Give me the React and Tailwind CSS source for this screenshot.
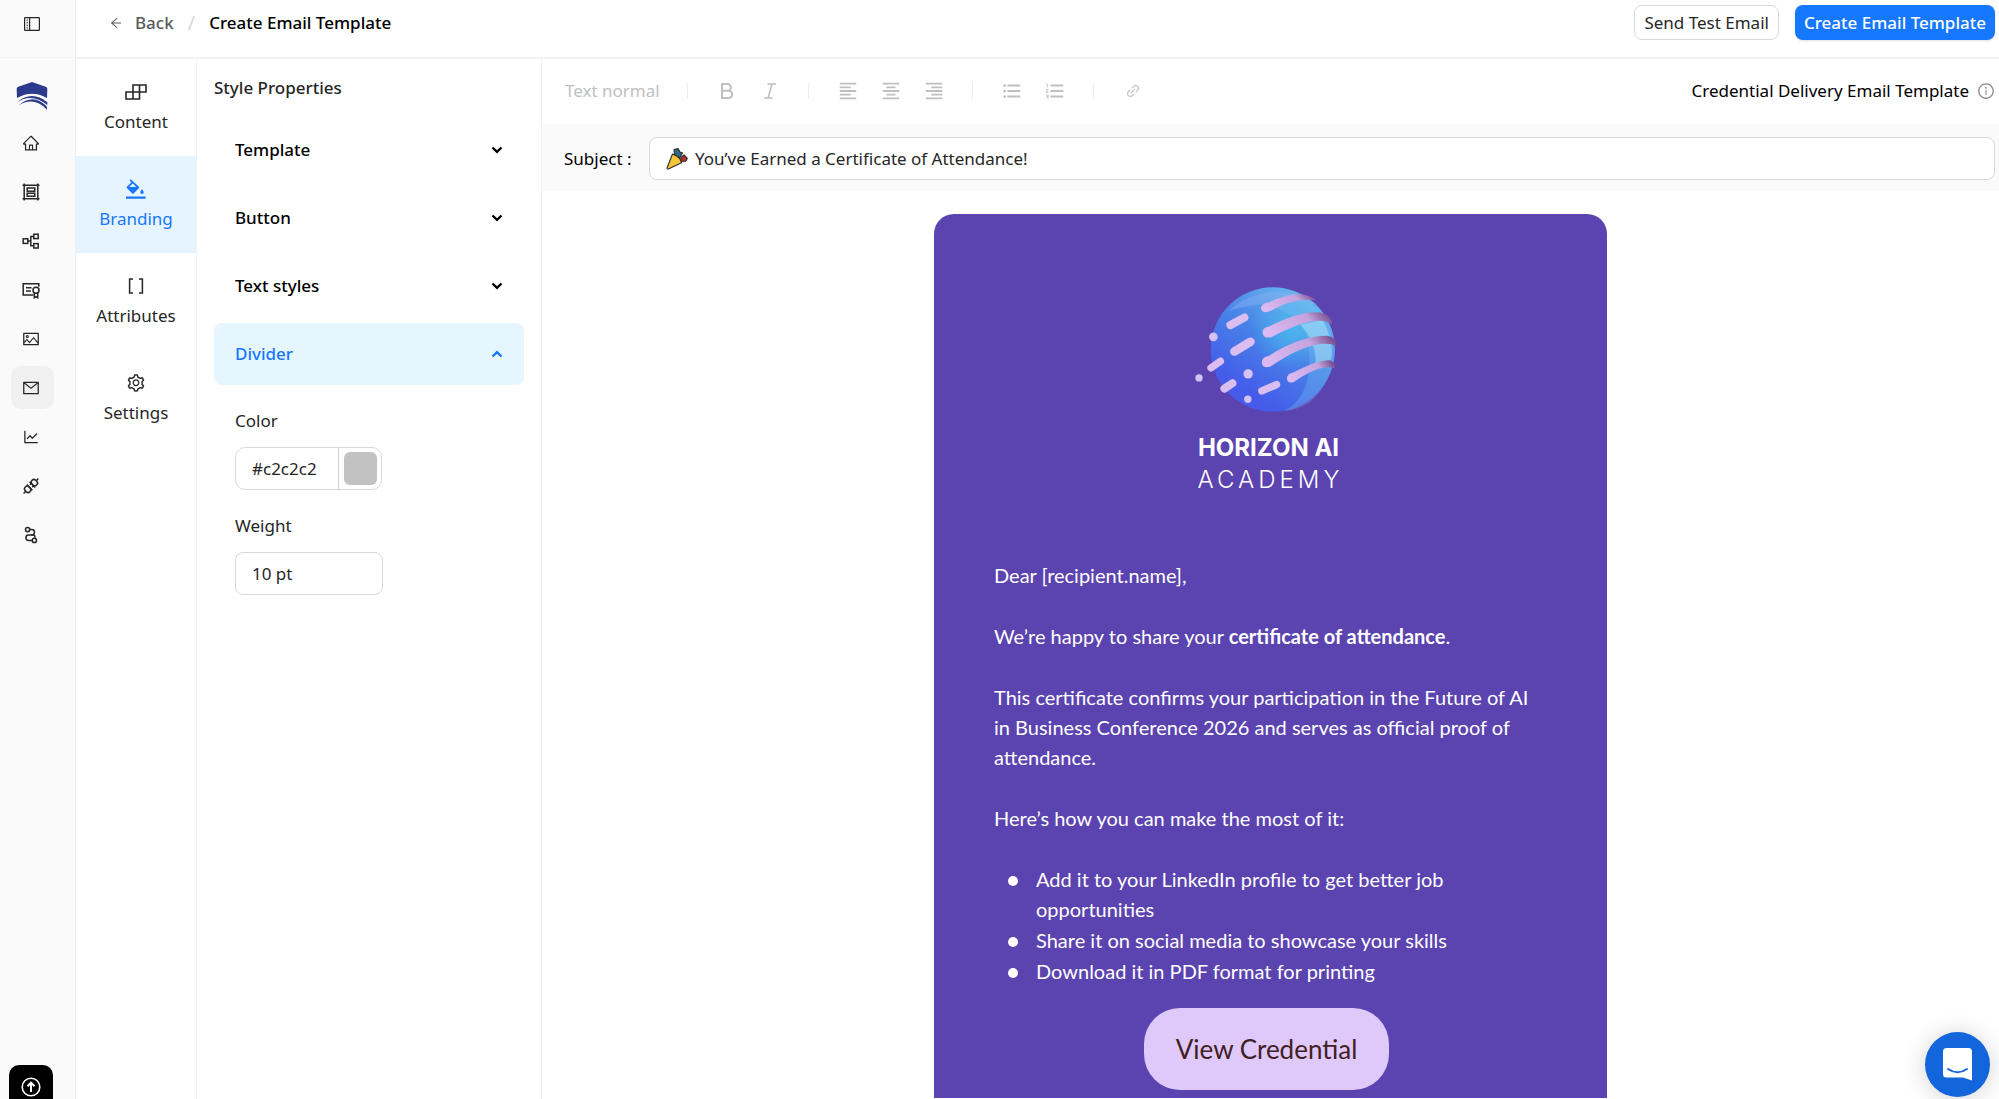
import {
  AiOutlineArrowLeft,
  AiOutlineHome,
  AiOutlineInfoCircle,
  AiOutlineLineChart,
  AiOutlineLink,
  AiOutlineMail,
  AiOutlinePicture,
  AiOutlineSetting,
} from 'react-icons/ai';
import {
  MdFormatAlignCenter,
  MdFormatAlignLeft,
  MdFormatAlignRight,
  MdFormatListBulleted,
  MdFormatListNumbered,
} from 'react-icons/md';
import clsx from 'clsx';

const line = { fill: 'none', stroke: 'currentColor', strokeWidth: 1.5 };

function ToggleIcon() {
  return (
    <svg viewBox="0 0 16 14" className="w-4 h-3.5" {...line} strokeWidth="1.2">
      <rect x="0.6" y="0.6" width="14.8" height="12.8" rx="0.6" />
      <path d="M5.6 0.6v12.8" />
      <path d="M3.2 2.5v9" strokeDasharray="1.2 1.4" />
    </svg>
  );
}

function FrameIcon() {
  return (
    <svg viewBox="0 0 18 18" className="size-[18px]" {...line}>
      <path d="M2.2 0.5v17M15.8 0.5v17M0.5 2.2h17M0.5 15.8h17" />
      <rect x="5.2" y="5" width="7.6" height="3.2" />
      <rect x="5.2" y="10.2" width="7.6" height="3" />
    </svg>
  );
}

function BranchIcon() {
  return (
    <svg viewBox="0 0 18 18" className="size-[18px]" {...line}>
      <rect x="1.2" y="6.8" width="4.6" height="4.6" />
      <rect x="11.8" y="2.2" width="4.4" height="4.4" />
      <rect x="11.8" y="11.6" width="4.4" height="4.4" />
      <path d="M5.8 9.1h3M11.8 4.4H8.8v9.4h3" />
    </svg>
  );
}

function CertificateIcon() {
  return (
    <svg viewBox="0 0 18 18" className="size-[18px]" {...line}>
      <path d="M11.5 14H1.2V2.8h15.6v3" />
      <path d="M4 6.8h5.5M4 10h4.8" />
      <circle cx="14" cy="9.2" r="3" />
      <path d="M12.3 11.8v5l1.7-1.2 1.7 1.2v-5" />
    </svg>
  );
}

function PlugIcon() {
  return (
    <svg viewBox="0 0 18 18" className="size-[18px]" {...line}>
      <g transform="rotate(45 9 9)">
        <path d="M9-1.5V1.6M9 16.4v3.1" />
        <rect x="5.7" y="1.6" width="6.6" height="5.4" rx="2.6" />
        <rect x="5.7" y="11" width="6.6" height="5.4" rx="2.6" />
        <path d="M5 7h8M5 11h8M7.3 7v2M10.7 7v2" />
      </g>
    </svg>
  );
}

function PathIcon() {
  return (
    <svg viewBox="0 0 18 18" className="size-[18px]" {...line}>
      <circle cx="5.6" cy="3.6" r="2.1" />
      <circle cx="12.4" cy="14.4" r="2.1" />
      <path d="M7.7 3.6h2.1a2.7 2.7 0 0 1 0 5.4H6.6a2.7 2.7 0 0 0 0 5.4h3.7" />
      <path d="M9.2 9h2.4c1.2 0 1.6 1.4 1.2 3" />
    </svg>
  );
}

function BlocksIcon() {
  return (
    <svg viewBox="0 0 22 16" className="w-[22px] h-4" {...line} strokeWidth="1.6">
      <path d="M8 1h13v7H8zM14.5 1v14H1V8h7v7M8 8v7M14.5 8H8" />
    </svg>
  );
}

function FillIcon() {
  return (
    <svg viewBox="0 0 20 20" className="size-5" fill="currentColor">
      <path d="M4.6 0.3 3.5 1.4l1.9 1.9L0.9 7.8a0.9 0.9 0 0 0 0 1.3l5.4 5.3a0.9 0.9 0 0 0 1.3 0L13 9.1a0.9 0.9 0 0 0 0-1.3zM3.1 7.9l3.6-3.4 3.7 3.4z" />
      <path d="M16 10.2s-1.7 1.9-1.7 3.1a1.7 1.7 0 0 0 3.4 0c0-1.2-1.7-3.1-1.7-3.1zM0 17.6h19.6v2.2H0z" />
    </svg>
  );
}

function BracketsIcon() {
  return (
    <svg viewBox="0 0 16 16" className="size-4" {...line}>
      <path d="M5 1H1.6v14H5M11 1h3.4v14H11" />
    </svg>
  );
}

function BoldIcon() {
  return (
    <svg viewBox="0 0 14 16" className="w-3.5 h-4" {...line} strokeWidth="2">
      <path d="M2 1h5.5a3.4 3.4 0 0 1 0 6.8H2zM2 7.8h6.6a3.6 3.6 0 0 1 0 7.2H2z" />
    </svg>
  );
}

function ItalicIcon() {
  return (
    <svg viewBox="0 0 14 16" className="w-3.5 h-4" {...line}>
      <path d="M4.5 1H13M1 15h8.5M9 1 5 15" />
    </svg>
  );
}

function Chevron({ open }) {
  return (
    <svg viewBox="0 0 12 8" className={clsx('w-3 h-2', open && 'rotate-180')} {...line} strokeWidth="2.4">
      <path d="m1.5 1.5 4.5 4.3 4.5-4.3" />
    </svg>
  );
}

function BrandMark() {
  return (
    <svg viewBox="20 27 94 84" className="w-8 h-7" fill="#2b3a8c">
      <path d="M67 27 108 41Q113 43 113 47L112 75Q67 49 22 75L21 47Q21 43 26 41z" />
      <path d="M22 88Q66 50 113 88V96Q66 58 22 88z" />
      <path d="M26 98Q72 58 112 102V110Q72 68 26 98z" />
    </svg>
  );
}

function PopperIcon() {
  return (
    <svg viewBox="0 0 22 22" className="w-[22px] h-[22px]" stroke="#2b2b2b" strokeWidth="1.1" strokeLinejoin="round">
      <path d="M8 1.500 12 0.600l2 3.400 2.500 1-3 5-5-3.500z" fill="#2c6a86" />
      <path d="m15 9.500 3-2.500 3.300 3.500-1.600 2.700-5.200.3z" fill="#b3322e" />
      <path d="M6.500 6 1 20q0 1.200 1.400 1L15.500 14.800q-.5-5.300-9-8.800z" fill="#f4c534" />
    </svg>
  );
}

// [x1, y1, x2, y2, width]
const dashes = [
  [210, 196, 252, 173, 24],
  [222, 275, 270, 246, 26],
  [152, 324, 180, 304, 22],
  [192, 386, 216, 370, 24],
  [304, 393, 348, 374, 22],
];

const dots = [
  [159, 231, 13],
  [116, 354, 11],
  [263, 342, 14],
  [262, 418, 11],
];

function Globe() {
  return (
    <svg viewBox="104 82 428 374" className="mr-2 w-[143px] h-[125px]" fill="none">
      <defs>
        <linearGradient id="sea" x1="0.8" y1="0.1" x2="0.3" y2="0.85">
          <stop offset="0" stopColor="#69b4f0" />
          <stop offset="0.5" stopColor="#4782e8" />
          <stop offset="1" stopColor="#455bea" />
        </linearGradient>
        <radialGradient id="glow" cx="0.64" cy="0.34" r="0.32">
          <stop offset="0" stopColor="#48bdee" stopOpacity="0.8" />
          <stop offset="1" stopColor="#48bdee" stopOpacity="0" />
        </radialGradient>
        <linearGradient id="band" x1="0" y1="0.6" x2="1" y2="0.3">
          <stop offset="0" stopColor="#dcb9f2" />
          <stop offset="0.7" stopColor="#c3a4de" />
          <stop offset="1" stopColor="#7a5292" />
        </linearGradient>
      </defs>
      <circle cx="337" cy="269" r="186" fill="url(#sea)" />
      <path d="M205 152Q300 70 430 108L470 134Q320 120 205 152z" fill="#8fb2f6" opacity="0.4" />
      <circle cx="337" cy="269" r="186" fill="url(#glow)" />
      <path d="M330 140Q410 160 440 235Q470 400 370 454Q480 444 518 310Q530 170 400 94z" fill="#7cc4f3" opacity="0.3" />
      <path d="M420 195l66-15q40 80 22 130l-44 8q6-70-44-123z" fill="#b9ecf7" opacity="0.45" />
      <path d="M301 145Q305 128 325 128Q420 82 468 122Q400 112 330 154Q304 164 301 145z" fill="url(#band)" />
      <path d="M306 216Q308 202 326 200Q420 152 480 158Q512 165 515 194Q470 160 332 232Q306 238 306 216z" fill="url(#band)" />
      <path d="M304 308Q304 292 325 288Q420 228 500 228Q528 232 528 258Q460 232 330 320Q306 328 304 308z" fill="url(#band)" />
      <path d="M379 355Q380 342 398 338Q470 300 508 301Q526 306 522 325Q480 310 400 366Q380 372 379 355z" fill="url(#band)" />
      <g stroke="#dabdf1" strokeLinecap="round">
        {dashes.map(([x1, y1, x2, y2, width]) => (
          <path key={x1} d={`M${x1} ${y1}L${x2} ${y2}`} strokeWidth={width} />
        ))}
      </g>
      {dots.map(([cx, cy, r]) => (
        <circle key={cx} cx={cx} cy={cy} r={r} fill="#d5c2f4" />
      ))}
    </svg>
  );
}

const railItems = [
  { label: 'Home', icon: <AiOutlineHome size={18} /> },
  { label: 'Designs', icon: <FrameIcon /> },
  { label: 'Workflows', icon: <BranchIcon /> },
  { label: 'Credentials', icon: <CertificateIcon /> },
  { label: 'Images', icon: <AiOutlinePicture size={18} /> },
  { label: 'Emails', icon: <AiOutlineMail size={18} />, active: true },
  { label: 'Analytics', icon: <AiOutlineLineChart size={18} /> },
  { label: 'Integrations', icon: <PlugIcon /> },
  { label: 'Pathways', icon: <PathIcon /> },
];

function Rail() {
  return (
    <aside className="w-[76px] shrink-0 flex flex-col bg-[#fafafa] border-r border-[#efefef]">
      <div className="h-[58px] pl-6 pb-2.5 flex items-center border-b border-[#f3f3f3]">
        <button aria-label="Toggle sidebar">
          <ToggleIcon />
        </button>
      </div>
      <a href="#" aria-label="Dashboard" className="mt-6 ml-4 w-8">
        <BrandMark />
      </a>
      <nav className="mt-[11px] ml-[11px] flex flex-col gap-1.5">
        {railItems.map(({ label, icon, active }) => (
          <a
            key={label}
            href="#"
            aria-label={label}
            className={clsx('size-[43px] pr-1 flex items-center justify-center rounded-[10px]', active && 'bg-[#f0f0f0]')}
          >
            {icon}
          </a>
        ))}
      </nav>
      <button
        aria-label="Upgrade"
        className="mt-auto ml-[9px] w-11 h-[34px] pt-1 flex justify-center rounded-t-[10px] bg-black text-white"
      >
        <svg viewBox="0 0 20 20" className="mt-2 size-5" {...line} strokeWidth="1.6">
          <circle cx="10" cy="10" r="8.800" />
          <path d="M10 15V6M6.500 9.200 10 5.700l3.500 3.500" strokeWidth="2" />
        </svg>
      </button>
    </aside>
  );
}

function Header() {
  return (
    <header className="h-[59px] shrink-0 pb-3 pl-[33px] pr-1 flex items-center border-b-2 border-[#f3f3f3]">
      <a href="#" className="flex items-center gap-3 font-medium text-[#595959]">
        <AiOutlineArrowLeft size={14} />
        Back
      </a>
      <span className="mx-3.5 text-xl text-[#d9d9d9]">/</span>
      <h1 className="font-medium text-black">Create Email Template</h1>
      <div className="ml-auto flex gap-4">
        <button className="h-[35px] px-[9px] rounded-lg border border-[#d9d9d9]">Send Test Email</button>
        <button className="h-[35px] px-[9px] rounded-lg bg-[#1677ff] font-medium text-white shadow-sm">
          Create Email Template
        </button>
      </div>
    </header>
  );
}

const tabs = [
  { label: 'Content', icon: <BlocksIcon /> },
  { label: 'Branding', icon: <FillIcon />, active: true },
  { label: 'Attributes', icon: <BracketsIcon /> },
  { label: 'Settings', icon: <AiOutlineSetting size={20} /> },
];

function Tabs() {
  return (
    <nav className="w-[121px] shrink-0 border-r border-[#f0f0f0]">
      {tabs.map(({ label, icon, active }) => (
        <a
          key={label}
          href="#"
          className={clsx(
            'h-[97px] flex flex-col items-center justify-center gap-2',
            active && 'bg-[#e6f4ff] text-[#1677ff]'
          )}
        >
          <span className="h-5 flex items-center">{icon}</span>
          {label}
        </a>
      ))}
    </nav>
  );
}

function StylePanel() {
  return (
    <section className="w-[345px] shrink-0 px-[17px] pt-[17px] border-r border-[#f0f0f0]">
      <h2 className="mb-[19px] font-medium">Style Properties</h2>
      <div className="flex flex-col gap-1.5">
        {['Template', 'Button', 'Text styles', 'Divider'].map((name) => {
          const open = name === 'Divider';
          return (
            <button
              key={name}
              aria-expanded={open}
              className={clsx(
                'h-[62px] px-[21px] flex items-center justify-between rounded-lg font-medium',
                open ? 'bg-[#e6f6ff] text-[#1677ff]' : 'text-black'
              )}
            >
              {name}
              <Chevron open={open} />
            </button>
          );
        })}
      </div>
      <div className="pl-[21px] pt-6">
        <label htmlFor="divider-color" className="block">Color</label>
        <div className="mt-3.5 w-[147px] h-[43px] flex rounded-[10px] border border-[#d9d9d9]">
          <input id="divider-color" defaultValue="#c2c2c2" className="min-w-0 flex-1 pl-4 outline-none" />
          <div className="w-[43px] flex items-center justify-center border-l border-[#d0d0d0]">
            <button aria-label="Pick color" className="size-[33px] rounded-md bg-[#c2c2c2]" />
          </div>
        </div>
        <label htmlFor="divider-weight" className="mt-6 block">Weight</label>
        <input
          id="divider-weight"
          defaultValue="10 pt"
          className="mt-3.5 w-[148px] h-[43px] px-4 rounded-lg border border-[#d9d9d9] outline-none"
        />
      </div>
    </section>
  );
}

function Tool({ label, children }) {
  return (
    <button aria-label={label} className="w-[43px] h-8 flex items-center justify-center">
      {children}
    </button>
  );
}

function Separator() {
  return <span className="mx-[17px] w-px h-4 bg-[#ececec]" />;
}

function Toolbar() {
  return (
    <div className="h-[65px] shrink-0 pl-[23px] pr-1 pb-0.5 flex items-center">
      <div className="flex items-center text-[#bfbfbf]">
        <button className="w-[105px] text-left">Text normal</button>
        <Separator />
        <Tool label="Bold"><BoldIcon /></Tool>
        <Tool label="Italic"><ItalicIcon /></Tool>
        <Separator />
        <Tool label="Align left"><MdFormatAlignLeft size={22} /></Tool>
        <Tool label="Align center"><MdFormatAlignCenter size={22} /></Tool>
        <Tool label="Align right"><MdFormatAlignRight size={22} /></Tool>
        <Separator />
        <Tool label="Bulleted list"><MdFormatListBulleted size={22} /></Tool>
        <Tool label="Numbered list"><MdFormatListNumbered size={22} /></Tool>
        <Separator />
        <Tool label="Link"><AiOutlineLink size={16} /></Tool>
      </div>
      <div className="ml-auto flex items-center gap-2 text-black">
        Credential Delivery Email Template
        <AiOutlineInfoCircle size={18} className="text-[#8c8c8c]" />
      </div>
    </div>
  );
}

function SubjectBar() {
  return (
    <div className="h-[67px] shrink-0 pl-[22px] pr-1 pt-0.5 flex items-center gap-4 bg-[#fafafa]">
      <label htmlFor="subject" className="w-[69px] text-black">Subject :</label>
      <div className="h-[43px] flex-1 pl-4 flex items-center gap-[7px] rounded-lg border border-[#d9d9d9] bg-white">
        <PopperIcon />
        <input
          id="subject"
          defaultValue="You’ve Earned a Certificate of Attendance!"
          className="flex-1 outline-none"
        />
      </div>
    </div>
  );
}

const steps = [
  'Add it to your LinkedIn profile to get better job opportunities',
  'Share it on social media to showcase your skills',
  'Download it in PDF format for printing',
];

function EmailCard() {
  return (
    <article className="w-[673px] shrink-0 mt-[23px] mx-auto pt-[73px] rounded-t-[20px] flex flex-col items-center bg-[#5b43b0] text-white">
      <Globe />
      <div className="mt-5 mr-1 text-center font-[Inter,sans-serif] text-2xl leading-8">
        <p className="font-bold">HORIZON AI</p>
        <p className="pl-1 font-light tracking-[4px]">ACADEMY</p>
      </div>
      <div className="mt-16 w-full px-[60px] flex flex-col gap-[31px] font-[Lato,sans-serif] text-[20px] leading-[30px]">
        <p>Dear [recipient.name],</p>
        <p>We’re happy to share your <strong>certificate of attendance</strong>.</p>
        <p>
          This certificate confirms your participation in the Future of AI in Business Conference 2026 and serves as
          official proof of attendance.
        </p>
        <p>Here’s how you can make the most of it:</p>
        <ul className="pr-16 flex flex-col gap-px">
          {steps.map((step) => (
            <li key={step} className="pl-3.5 flex gap-[18px]">
              <span className="mt-3 size-2.5 shrink-0 rounded-full bg-white" />
              {step}
            </li>
          ))}
        </ul>
      </div>
      <button className="mt-[22px] mr-2 mb-2 h-[82px] px-8 rounded-[36px] bg-[#dec9fa] font-[Lato,sans-serif] text-[26px] text-[#41201f]">
        View Credential
      </button>
    </article>
  );
}

export default function App() {
  return (
    <div className="h-screen flex overflow-hidden bg-white font-['Noto_Sans',sans-serif] text-[17px] leading-6 text-[#262626]">
      <Rail />
      <div className="flex-1 min-w-0 flex flex-col">
        <Header />
        <main className="flex-1 min-h-0 flex">
          <Tabs />
          <StylePanel />
          <section className="flex-1 min-w-0 flex flex-col">
            <Toolbar />
            <SubjectBar />
            <EmailCard />
          </section>
        </main>
      </div>
      <button
        aria-label="Open chat"
        className="absolute right-[9px] bottom-0.5 size-[65px] flex items-center justify-center rounded-full bg-[#1365db] shadow-[0_2px_24px_rgba(0,0,0,0.18)]"
      >
        <svg viewBox="0 0 29 33" className="w-[29px] h-[33px]">
          <path d="M3.500 0h22A3.500 3.500 0 0 1 29 3.500V32.500L20 29.500H3.500A3.500 3.500 0 0 1 0 26V3.500A3.500 3.500 0 0 1 3.500 0z" fill="#fff" />
          <path d="M5 21Q14.500 27.500 24 21" fill="none" stroke="#1365db" strokeWidth="2" strokeLinecap="round" />
        </svg>
      </button>
    </div>
  );
}
